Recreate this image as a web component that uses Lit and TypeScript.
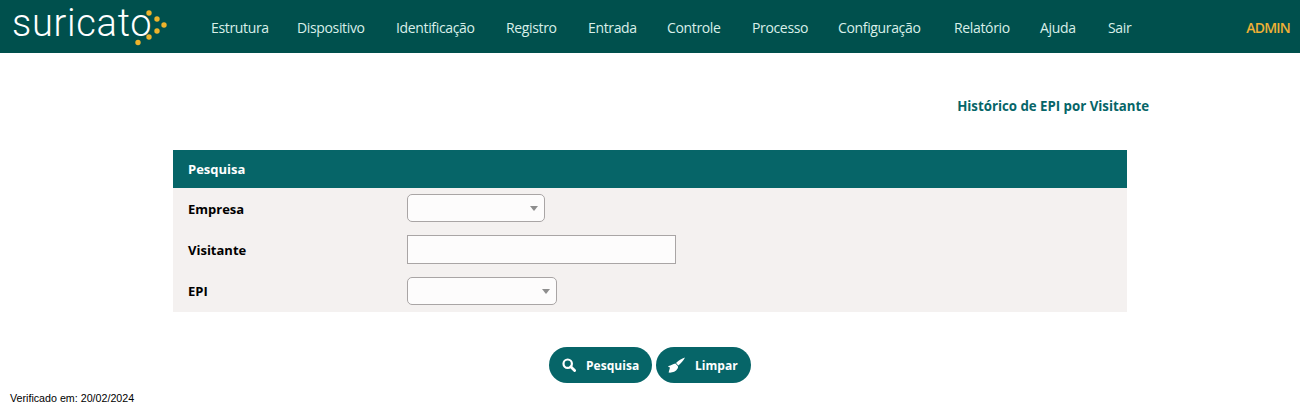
import { LitElement, html, css } from "lit";
import { customElement } from "lit/decorators.js";

const NAV: [string, number][] = [["Estrutura",86],["Dispositivo",99],["Identificação",110],["Registro",82],["Entrada",79],["Controle",85],["Processo",86],["Configuração",116],["Relatório",86],["Ajuda",68],["Sair",60]];

@customElement("app-root")
export class AppRoot extends LitElement {
  static styles = css`
    :host { display: block; width: 1300px; height: 413px; overflow: hidden; background: #fff; font-family: "Open Sans", sans-serif; color: #000; }
    .top { height: 53px; background: #00504d; display: flex; align-items: center; }
    .logo { width: 211px; height: 53px; flex: none; box-sizing: border-box; padding: 0 0 0 12px; position: relative; }
    .logo-text { display: block; font-family: Roboto, sans-serif; font-weight: 300; font-size: 38px; line-height: 46px; color: #fff; letter-spacing: 0.7px; }
    .dots { position: absolute; left: 130px; top: 8px; }
    nav { display: flex; flex: 1; }
    nav span { font-size: 14px; color: #d9efe9; letter-spacing: -0.35px; line-height: 53px; margin-top: 2px; white-space: nowrap; }
    .admin { font-size: 14px; font-weight: 600; color: #efb035; letter-spacing: -0.8px; margin-right: 10px; margin-top: 1px; }
    .title { text-align: right; padding: 44px 151px 0 0; height: 53px; font-weight: 700; font-size: 13.25px; line-height: 18px; color: #066568; }
    .panel { margin-left: 173px; width: 954px; background: #f4f1f0; height: 162px; }
    .head { height: 38px; background: #066568; color: #fff; font-weight: 700; font-size: 13px; line-height: 38px; padding-left: 15px; }
    .row { display: grid; grid-template-columns: 219px 1fr; align-items: center; padding-left: 15px; font-weight: 700; font-size: 13px; }
    .r1 { height: 41px; }
    .r2 { height: 41px; }
    .r3 { height: 42px; }
    .sel { box-sizing: border-box; height: 28px; border: 1px solid #a9a5a5; border-radius: 5px; background: #fdfcfc; position: relative; }
    .sel::after { content: ""; position: absolute; right: 6px; top: 11px; border-left: 4px solid transparent; border-right: 4px solid transparent; border-top: 5px solid #8e8e8e; }
    .s1 { width: 138px; margin-top: -1px; }
    .s2 { width: 150px; }
    .inp { box-sizing: border-box; width: 269px; height: 29px; border: 1px solid #a9a5a5; background: #fdfcfc; }
    .btns { display: flex; justify-content: center; gap: 4px; margin-top: 35px; }
    .btn { height: 36px; border-radius: 18px; background: #066568; color: #fff; font-weight: 700; font-size: 12px; display: flex; align-items: center; box-sizing: border-box; letter-spacing: 0.03px; }
    .b1 { width: 103px; padding-left: 13px; gap: 10px; }
    .b2 { width: 95px; padding-left: 12px; gap: 10px; }
    .foot { font-family: "Liberation Sans", sans-serif; font-size: 10.7px; margin: 7px 0 0 10px; line-height: 16px; }
    svg { display: block; flex: none; }
  `;
  render() {
    return html`
      <div class="top">
        <div class="logo">
          <span class="logo-text">suricato</span>
          <svg class="dots" width="38" height="40" viewBox="0 0 38 40" fill="#eeb32b">
            <circle cx="19" cy="5" r="2.7"/><circle cx="27" cy="11" r="2.7"/><circle cx="34" cy="17" r="2.7"/>
            <circle cx="27" cy="23" r="2.7"/><circle cx="19" cy="29" r="2.7"/><circle cx="8" cy="34.5" r="2.7"/>
          </svg>
        </div>
        <nav>${NAV.map(([n, w]) => html`<span style="width:${w}px">${n}</span>`)}</nav>
        <div class="admin">ADMIN</div>
      </div>
      <div class="title">Histórico de EPI por Visitante</div>
      <div class="panel">
        <div class="head">Pesquisa</div>
        <div class="row r1"><span>Empresa</span><div class="sel s1"></div></div>
        <div class="row r2"><span>Visitante</span><div class="inp"></div></div>
        <div class="row r3"><span>EPI</span><div class="sel s2"></div></div>
      </div>
      <div class="btns">
        <div class="btn b1">
          <svg width="14" height="14" viewBox="0 0 14 14" fill="none" stroke="#fff"><circle cx="5.7" cy="5.7" r="4.2" stroke-width="2.2"/><path d="M8.8 8.8L12.6 12.6" stroke-width="2.8" stroke-linecap="round"/></svg>
          <span>Pesquisa</span>
        </div>
        <div class="btn b2">
          <svg width="17" height="16" viewBox="0 0 17 16" fill="#fff"><path d="M17 .5C13.5 1.5 10.5 3.5 8 6l2.3 2.4C13 6.2 15.5 3.5 17 .5z"/><path d="M7.4 6.5C5 7.2 3 8.4.6 9c-.5.2-.5.7 0 .9l1.4.5L.6 15.6c3.2.4 7-.6 9-4 .5-.9.6-1.9.2-2.7z"/></svg>
          <span>Limpar</span>
        </div>
      </div>
      <div class="foot">Verificado em: 20/02/2024</div>
    `;
  }
}
